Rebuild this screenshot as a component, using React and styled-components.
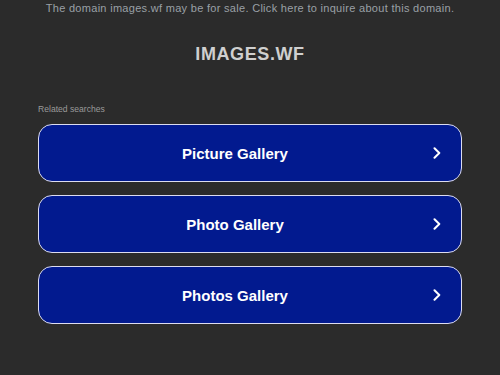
import React from 'react';
import styled, { createGlobalStyle } from 'styled-components';

const GlobalStyle = createGlobalStyle`
  html, body {
    margin: 0;
    padding: 0;
    background: #2b2b2b;
    font-family: 'Liberation Sans', Arial, sans-serif;
  }
`;

const Page = styled.div`
  width: 500px;
  height: 375px;
  display: flex;
  flex-direction: column;
  align-items: center;
  overflow: hidden;
`;

const SaleBanner = styled.div`
  margin-top: 2px;
  font-size: 11px;
  line-height: 12px;
  letter-spacing: 0.3px;
  color: #9aa0a6;
`;

const DomainTitle = styled.h1`
  margin: 30px 0 0;
  font-size: 18px;
  line-height: 20px;
  font-weight: 700;
  letter-spacing: 0.6px;
  color: #cfcfcf;
`;

const Related = styled.section`
  width: 424px;
  margin-top: 40px;
  display: flex;
  flex-direction: column;
`;

const RelatedLabel = styled.div`
  font-size: 8.6px;
  line-height: 10px;
  color: #9a9a9a;
  margin-bottom: 10px;
`;

const LinkList = styled.div`
  display: flex;
  flex-direction: column;
  gap: 13px;
`;

const SearchLink = styled.a`
  position: relative;
  box-sizing: border-box;
  height: 58px;
  padding-right: 30px;
  display: flex;
  align-items: center;
  justify-content: center;
  background: #021a8f;
  border: 1.5px solid #dcdcf0;
  border-radius: 14px;
  color: #ffffff;
  font-size: 15px;
  font-weight: 700;
  text-decoration: none;
`;

const Chevron = styled.svg`
  position: absolute;
  right: 20px;
  top: 50%;
  margin-top: -6px;
`;

const searches = ['Picture Gallery', 'Photo Gallery', 'Photos Gallery'];

export default function App() {
  return (
    <Page>
      <GlobalStyle />
      <SaleBanner>The domain images.wf may be for sale. Click here to inquire about this domain.</SaleBanner>
      <DomainTitle>IMAGES.WF</DomainTitle>
      <Related>
        <RelatedLabel>Related searches</RelatedLabel>
        <LinkList>
          {searches.map((s) => (
            <SearchLink key={s} href="#">
              {s}
              <Chevron width="8" height="12" viewBox="0 0 8 12">
                <path d="M1.5 1.2 L6.3 6 L1.5 10.8" fill="none" stroke="#fff" strokeWidth="2" strokeLinecap="round" strokeLinejoin="round" />
              </Chevron>
            </SearchLink>
          ))}
        </LinkList>
      </Related>
    </Page>
  );
}
